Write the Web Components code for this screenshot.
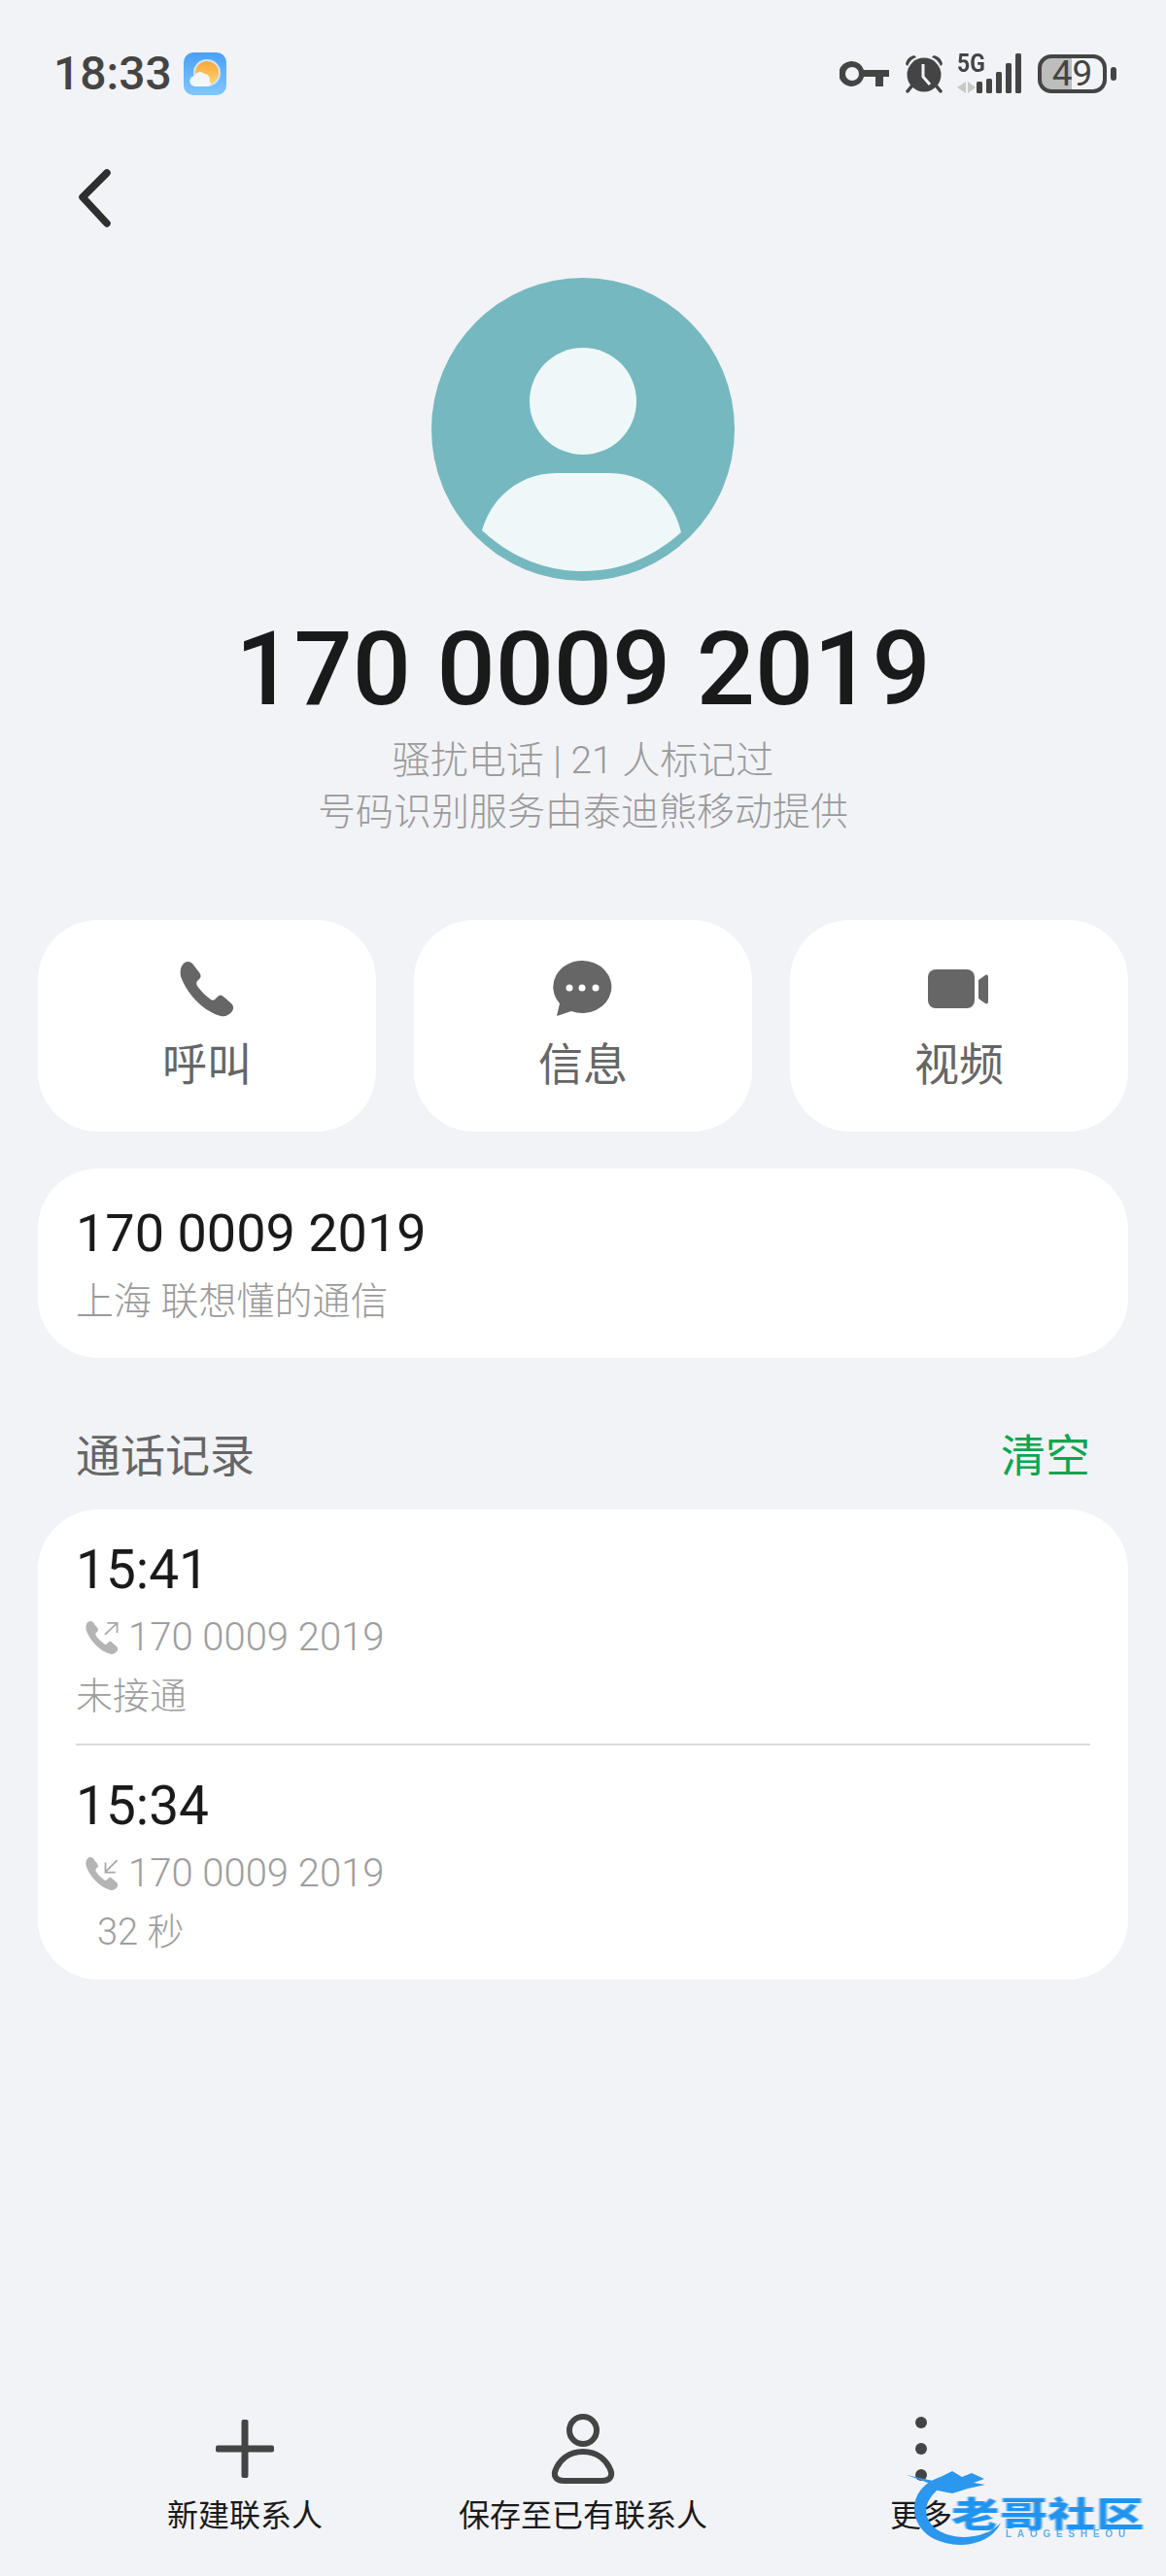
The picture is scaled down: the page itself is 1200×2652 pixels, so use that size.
<!DOCTYPE html>
<html lang="zh">
<head>
<meta charset="utf-8">
<title>170 0009 2019</title>
<style>
html, body { margin: 0; padding: 0; }
body {
  width: 1200px;
  height: 2652px;
  overflow: hidden;
  position: relative;
  display: flex;
  flex-direction: column;
  background: #f2f3f7;
  font-family: Roboto, "Noto Sans CJK SC", sans-serif;
}
</style>
</head>
<body>
<status-bar></status-bar>
<back-nav></back-nav>
<contact-hero number="170 0009 2019">
  <span>骚扰电话 | 21 人标记过</span>
  <span>号码识别服务由泰迪熊移动提供</span>
</contact-hero>
<action-row>
  <action-button icon="phone">呼叫</action-button>
  <action-button icon="message">信息</action-button>
  <action-button icon="video">视频</action-button>
</action-row>
<number-card number="170 0009 2019">上海 联想懂的通信</number-card>
<section-head action="清空">通话记录</section-head>
<call-log>
  <call-row time="15:41" number="170 0009 2019" dir="out">未接通</call-row>
  <call-row time="15:34" number="170 0009 2019" dir="in" indent>32 秒</call-row>
</call-log>
<bottom-bar>
  <bottom-action icon="plus">新建联系人</bottom-action>
  <bottom-action icon="person">保存至已有联系人</bottom-action>
  <bottom-action icon="more">更多</bottom-action>
</bottom-bar>
<water-mark></water-mark>

<script>
var handset = 'M5 1C8-1 11 0 13 2L20 11C22 14 22 16 20 18L18 20C17 21 17 23 18 25C22 31 27 35 32 39C33 40 35 40 36 39L39 36C41 34 43 34 45 36L53 43C55 45 56 48 54 51C51 55 47 57 42 56C24 51 7 33 1 15C0 9 1 4 5 1Z'

class StatusBar extends HTMLElement {
  connectedCallback() {
    var shadow = this.attachShadow({mode: 'open'})
    shadow.innerHTML = `<style>
:host { display: flex; justify-content: space-between; align-items: center; box-sizing: border-box; height: 152px; padding: 0 51px 0 55px; color: #444; }
.left, .right { display: flex; align-items: center; }
.time { font-size: 48px; line-height: 60px; font-weight: 500; }
.weather { margin-left: 12px; }
.key { margin-right: 15px; }
.alarm { margin-right: 13px; }
.signal { position: relative; width: 66px; height: 42px; margin-right: 17px; }
.signal span { position: absolute; left: 0; top: -3px; font: 700 26px/26px "Liberation Sans Narrow", "Roboto", sans-serif; transform: scaleX(.88); transform-origin: left; }
.battery { box-sizing: border-box; width: 71px; height: 40px; border: 4px solid #444; border-radius: 14px; display: flex; align-items: center; justify-content: center; font-size: 37px; line-height: 32px; background: linear-gradient(90deg, #bdbdbd 50%, transparent 50%); background-clip: padding-box; }
.nub { width: 6px; height: 14px; margin-left: 4px; border-radius: 3px; background: #444; }
</style>
<div class="left">
  <span class="time">18:33</span>
  <svg class="weather" width="44" height="44" viewBox="0 0 44 44">
    <defs>
      <linearGradient id="sky" x1="0" y1="0" x2="0" y2="1"><stop offset="0" stop-color="#4aa0f6"/><stop offset="1" stop-color="#82c6fc"/></linearGradient>
      <linearGradient id="sun" x1="0" y1="0" x2="0" y2="1"><stop offset="0" stop-color="#f9a63c"/><stop offset="1" stop-color="#fbd66b"/></linearGradient>
    </defs>
    <rect width="44" height="44" rx="10" fill="url(#sky)"/>
    <circle cx="24" cy="21" r="14" fill="#cfe6f7"/>
    <circle cx="24" cy="21" r="12" fill="url(#sun)"/>
    <path d="M12 35a5.500 5.500 0 0 1-.5-11a6 6 0 0 1 10-2a5.500 5.500 0 0 1 5 7.500a3 3 0 0 1-1 5.500Z" fill="#f2f7fb"/>
  </svg>
</div>
<div class="right">
  <svg class="key" width="51" height="26" viewBox="0 0 51 26" fill="#444">
    <path fill-rule="evenodd" d="M13 0A13 13 0 0 1 25 9H51V16H45V26H37V16H25A13 13 0 1 1 13 0ZM13 6A7 7 0 1 0 13 20A7 7 0 1 0 13 6Z"/>
  </svg>
  <svg class="alarm" width="42" height="40" viewBox="0 0 42 40">
    <circle cx="21" cy="21" r="17.500" fill="#444"/>
    <path d="M2 10C3 5 6 2 11 1L13 3C9 4 6 7 4 12ZM40 10C39 5 36 2 31 1L29 3C33 4 36 7 38 12Z" fill="#444"/>
    <path d="M8 33L4 38M34 33L38 38" stroke="#444" stroke-width="3.500" stroke-linecap="round"/>
    <path d="M20 10V23L27 31" fill="none" stroke="#f2f3f7" stroke-width="3"/>
  </svg>
  <div class="signal">
    <svg width="66" height="42" viewBox="0 0 66 42">
      <path d="M9 29V41L0 35ZM11 29V41L19 35Z" fill="#c8c8c8"/>
      <g fill="#444">
        <rect x="20" y="29" width="6" height="12" rx="1.500"/>
        <rect x="30" y="26" width="6" height="15" rx="1.500"/>
        <rect x="40" y="19" width="6" height="22" rx="1.500"/>
        <rect x="50" y="10" width="6" height="31" rx="1.500"/>
        <rect x="60" y="0" width="6" height="41" rx="1.500"/>
      </g>
    </svg>
    <span>5G</span>
  </div>
  <div class="battery">49</div>
  <div class="nub"></div>
</div>`
  }
}
customElements.define('status-bar', StatusBar)

class BackNav extends HTMLElement {
  connectedCallback() {
    var shadow = this.attachShadow({mode: 'open'})
    shadow.innerHTML = `<style>
:host { display: block; box-sizing: border-box; height: 134px; padding: 22px 0 0 80px; }
svg { display: block; }
</style>
<svg width="34" height="60" viewBox="0 0 34 60" fill="none" stroke="#2e2e2e" stroke-width="7.500" stroke-linecap="round" stroke-linejoin="round"><path d="M30 4L5 29L30 56"/></svg>`
  }
}
customElements.define('back-nav', BackNav)

class ContactHero extends HTMLElement {
  connectedCallback() {
    var shadow = this.attachShadow({mode: 'open'})
    shadow.innerHTML = `<style>
:host { display: flex; flex-direction: column; align-items: center; }
svg { display: block; }
h1 { margin: 36px 0 13px; font-size: 106px; line-height: 110px; font-weight: 500; color: #1a1a1a; }
.sub { display: flex; flex-direction: column; align-items: center; font-size: 39px; line-height: 53px; color: #9a9a9a; font-weight: 300; }
::slotted(span) { display: block; }
</style>
<svg width="312" height="312" viewBox="0 0 312 312">
  <circle cx="156" cy="156" r="156" fill="#76b8bf"/>
  <circle cx="156" cy="127" r="55" fill="#eff8f8"/>
  <path d="M52 260C62 225 92 201 129 201H183C220 201 248 225 257 262C228 288 194 302 156 302C118 302 82 288 52 260Z" fill="#eff8f8"/>
</svg>
<h1>${this.getAttribute('number')}</h1>
<div class="sub"><slot></slot></div>`
  }
}
customElements.define('contact-hero', ContactHero)

class ActionRow extends HTMLElement {
  connectedCallback() {
    var shadow = this.attachShadow({mode: 'open'})
    shadow.innerHTML = `<style>
:host { display: grid; grid-template-columns: repeat(3, 348px); gap: 39px; padding: 84px 39px 0; }
</style><slot></slot>`
  }
}
customElements.define('action-row', ActionRow)

var actionIcons = {
  phone: `<svg width="64" height="60" viewBox="-4 -1 64 60"><path fill="#666" d="${handset}"/></svg>`,
  message: `<svg width="64" height="60" viewBox="0 0 64 60"><path fill="#666" d="M31 0A30 27 0 1 1 20 52L5 57L8 44A30 27 0 0 1 31 0Z"/><g fill="#fff"><circle cx="18" cy="28" r="3.500"/><circle cx="31" cy="28" r="3.500"/><circle cx="45" cy="28" r="3.500"/></g></svg>`,
  video: `<svg width="64" height="60" viewBox="0 0 64 60"><rect x="0" y="9" width="48" height="40" rx="8" fill="#666"/><path d="M52 20L59 15C61 14 62 15 62 17V42C62 44 61 45 59 44L52 39Z" fill="#666"/></svg>`
}

class ActionButton extends HTMLElement {
  connectedCallback() {
    var shadow = this.attachShadow({mode: 'open'})
    shadow.innerHTML = `<style>
:host { display: flex; flex-direction: column; align-items: center; box-sizing: border-box; height: 218px; padding-top: 42px; background: #fff; border-radius: 62px; color: #666; }
svg { display: block; }
.label { margin-top: 17px; font-size: 46px; line-height: 60px; }
</style>
${actionIcons[this.getAttribute('icon')]}
<div class="label"><slot></slot></div>`
  }
}
customElements.define('action-button', ActionButton)

class NumberCard extends HTMLElement {
  connectedCallback() {
    var shadow = this.attachShadow({mode: 'open'})
    shadow.innerHTML = `<style>
:host { display: block; box-sizing: border-box; height: 195px; margin: 38px 39px 0; padding: 37px 39px 0; background: #fff; border-radius: 62px; }
.num { font-size: 54px; line-height: 60px; color: #1a1a1a; }
.loc { margin-top: 10px; font-size: 39px; line-height: 60px; color: #9a9a9a; font-weight: 300; }
</style>
<div class="num">${this.getAttribute('number')}</div>
<div class="loc"><slot></slot></div>`
  }
}
customElements.define('number-card', NumberCard)

class SectionHead extends HTMLElement {
  connectedCallback() {
    var shadow = this.attachShadow({mode: 'open'})
    shadow.innerHTML = `<style>
:host { display: flex; justify-content: space-between; align-items: center; box-sizing: border-box; height: 156px; padding: 46px 78px 0; font-size: 46px; line-height: 66px; color: #666; }
.act { color: #0aa650; }
</style>
<div><slot></slot></div>
<div class="act">${this.getAttribute('action')}</div>`
  }
}
customElements.define('section-head', SectionHead)

class CallLog extends HTMLElement {
  connectedCallback() {
    var shadow = this.attachShadow({mode: 'open'})
    shadow.innerHTML = `<style>
:host { display: block; box-sizing: border-box; height: 484px; margin: 0 39px; padding: 0 39px; background: #fff; border-radius: 62px; }
::slotted(call-row:not(:last-child)) { border-bottom: 2px solid #dcdcdc; }
</style><slot></slot>`
  }
}
customElements.define('call-log', CallLog)

class CallRow extends HTMLElement {
  connectedCallback() {
    var shadow = this.attachShadow({mode: 'open'})
    var arrow = this.getAttribute('dir') == 'in'
      ? '<path d="M54 5L34 25M34 9V26H51" fill="none" stroke="#a8a8a8" stroke-width="3"/>'
      : '<path d="M33 23L54 3M37 3H54V20" fill="none" stroke="#a8a8a8" stroke-width="3"/>'
    shadow.innerHTML = `<style>
:host { display: block; box-sizing: border-box; height: 243px; padding-top: 31px; }
.time { font-size: 55px; line-height: 62px; color: #1a1a1a; }
.num { display: flex; align-items: center; margin-top: 9px; font-size: 40px; line-height: 60px; color: #9e9e9e; font-weight: 300; }
svg { display: block; margin: 0 9px 0 10px; }
.note { margin-top: 0; font-size: 38px; line-height: 60px; color: #9e9e9e; font-weight: 300; ${this.hasAttribute('indent') ? 'padding-left: 22px;' : ''} }
</style>
<div class="time">${this.getAttribute('time')}</div>
<div class="num">
  <svg width="35" height="35" viewBox="0 0 58 58"><path fill="#b4b4b4" d="${handset}"/>${arrow}</svg>
  <span>${this.getAttribute('number')}</span>
</div>
<div class="note"><slot></slot></div>`
  }
}
customElements.define('call-row', CallRow)

class BottomBar extends HTMLElement {
  connectedCallback() {
    var shadow = this.attachShadow({mode: 'open'})
    shadow.innerHTML = `<style>
:host { display: grid; grid-template-columns: repeat(3, 348px); margin-top: auto; padding: 0 78px 40px; }
</style><slot></slot>`
  }
}
customElements.define('bottom-bar', BottomBar)

var bottomIcons = {
  plus: `<svg width="60" height="60" viewBox="0 0 60 60" fill="#444"><rect x="26.500" y="0" width="7" height="60" rx="2"/><rect x="0" y="26.500" width="60" height="7" rx="2"/></svg>`,
  person: `<svg width="66" height="72" viewBox="0 0 66 72" fill="none" stroke="#444" stroke-width="6"><circle cx="33" cy="17" r="14"/><path d="M13 69C7 69 3 66 4 60C8 47 19 39 33 39C47 39 58 47 62 60C63 66 59 69 53 69Z" stroke-linejoin="round"/></svg>`,
  more: `<svg width="12" height="66" viewBox="0 0 12 66" fill="#444"><circle cx="6" cy="6" r="6"/><circle cx="6" cy="33" r="6"/><circle cx="6" cy="60" r="6"/></svg>`
}

class BottomAction extends HTMLElement {
  connectedCallback() {
    var shadow = this.attachShadow({mode: 'open'})
    shadow.innerHTML = `<style>
:host { display: flex; flex-direction: column; align-items: center; }
.icon { display: flex; align-items: center; justify-content: center; height: 72px; }
svg { display: block; }
.label { margin-top: 11px; font-size: 32px; line-height: 44px; color: #1a1a1a; white-space: nowrap; }
</style>
<div class="icon">${bottomIcons[this.getAttribute('icon')]}</div>
<div class="label"><slot></slot></div>`
  }
}
customElements.define('bottom-action', BottomAction)

// site logo stamped over the bottom right corner of the screenshot
class WaterMark extends HTMLElement {
  connectedCallback() {
    var shadow = this.attachShadow({mode: 'open'})
    shadow.innerHTML = `<style>
:host { position: absolute; left: 930px; top: 2530px; width: 270px; height: 100px; display: block; }
svg { position: absolute; left: 0; top: 0; filter: blur(.7px); }
.name { position: absolute; left: 49px; top: 34px; width: 145px; font: 900 36px/44px "Noto Sans CJK SC", sans-serif; white-space: nowrap; transform: scaleX(1.38); transform-origin: left; color: #1f93ee; filter: blur(.7px); }
.en { position: absolute; left: 105px; top: 73px; font: 700 10px/12px "Liberation Sans", sans-serif; letter-spacing: 5.800px; color: #5fb0ea; white-space: nowrap; filter: blur(.3px); }
</style>
<svg width="110" height="100" viewBox="0 0 110 100">
  <path d="M38 20C6 30 2 65 28 82C55 97 90 90 100 67C88 82 55 88 34 74C16 60 20 38 50 24Z" fill="#2b97ee"/>
  <path d="M3 18L30 24L50 14L60 20L70 16L83 22L72 26L84 28L66 32L50 37L35 34L25 26Z" fill="#2b97ee"/>
</svg>
<div class="name">老哥社区</div>
<div class="en">LAOGESHEOU</div>`
  }
}
customElements.define('water-mark', WaterMark)
</script>
</body>
</html>
